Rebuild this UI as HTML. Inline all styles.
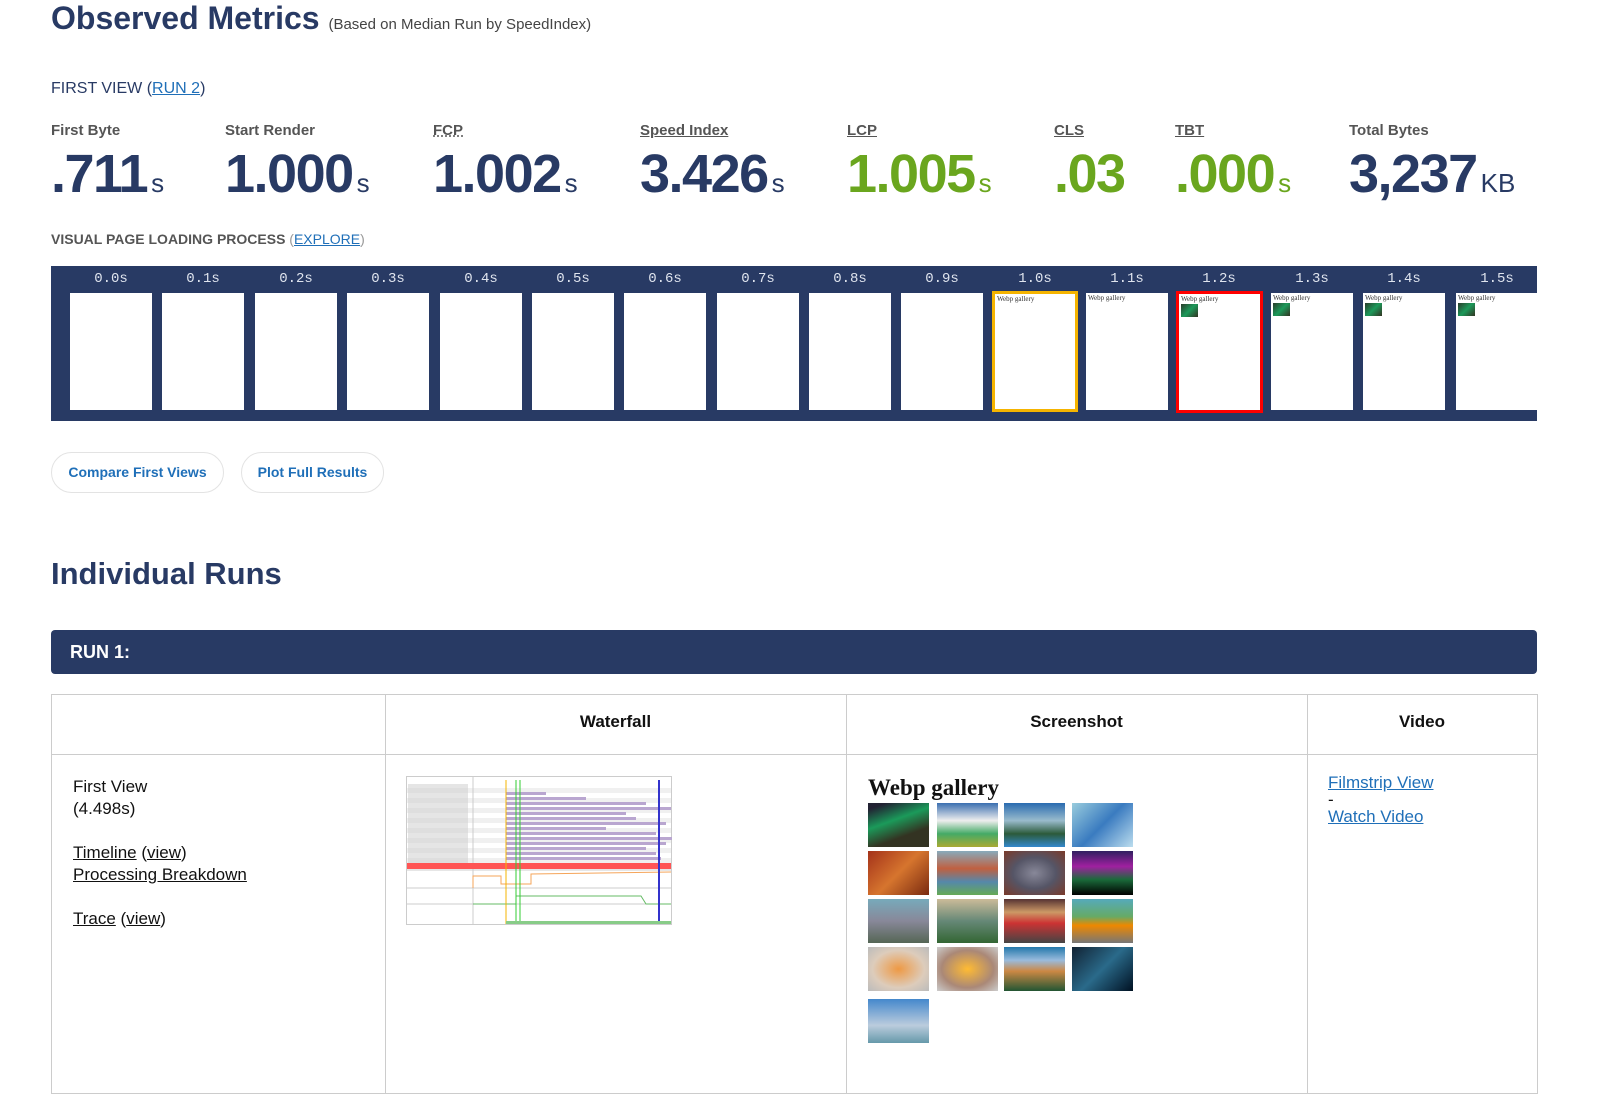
<!DOCTYPE html>
<html><head><meta charset="utf-8"><style>
*{margin:0;padding:0;box-sizing:border-box}
body{width:1600px;height:1053px;overflow:hidden;background:#fff;font-family:"Liberation Sans",sans-serif;color:#283a64;position:relative}
.a{position:absolute}
h1{position:absolute;left:51px;top:0px;font-size:32px;font-weight:bold;letter-spacing:0;white-space:nowrap}
h1 small{font-size:15px;font-weight:normal;color:#444;letter-spacing:0}
.lab{position:absolute;top:122px;font-size:15px;font-weight:bold;color:#555;white-space:nowrap}
.val{position:absolute;top:143px;font-size:54px;font-weight:bold;letter-spacing:-1.5px;white-space:nowrap}
.val span{font-size:26px;font-weight:normal;letter-spacing:0;margin-left:4px}
.g{color:#6aa61e}
a{color:#1f6fb8}
.strip{position:absolute;left:51px;top:266px;width:1486px;height:155px;background:#283a64;overflow:hidden}
.fr{position:absolute;top:27px;width:82px;height:117px;background:#fff}
.tl{position:absolute;top:5px;width:82px;text-align:center;color:#dfe4ee;font-family:"Liberation Mono",monospace;font-size:14px}
.wg{font-family:"Liberation Serif",serif;font-size:7px;color:#333;position:absolute;left:2px;top:1px}
.th{position:absolute;left:2px;top:10px;width:17px;height:13px;background:linear-gradient(135deg,#2a3b2a,#1c9a5a 50%,#332)}
.btn{position:absolute;top:452px;height:41px;border:1px solid #e3e3e3;border-radius:21px;font-size:14px;font-weight:bold;color:#1f6fb8;line-height:39px;text-align:center}
.run{position:absolute;left:51px;top:630px;width:1486px;height:44px;background:#283a64;border-radius:4px;color:#fff;font-weight:bold;font-size:18px;line-height:44px;padding-left:19px}
.tb{position:absolute;border:1px solid #ccc}
.hd{position:absolute;top:712px;font-weight:bold;font-size:17px;color:#111;text-align:center}
.c{position:absolute;font-size:17px;color:#111;line-height:22px}
.c u{text-decoration:underline}
.pic{position:absolute;width:61px;height:44px}
</style></head><body>
<h1>Observed Metrics <small>(Based on Median Run by SpeedIndex)</small></h1>
<div class="a" style="left:51px;top:80px;font-size:16px;color:#283a64">FIRST VIEW (<a href="#">RUN 2</a>)</div>

<div class="lab" style="left:51px">First Byte</div>
<div class="lab" style="left:225px">Start Render</div>
<div class="lab" style="left:433px;text-decoration:underline dotted">FCP</div>
<div class="lab" style="left:640px;text-decoration:underline">Speed Index</div>
<div class="lab" style="left:847px;text-decoration:underline">LCP</div>
<div class="lab" style="left:1054px;text-decoration:underline">CLS</div>
<div class="lab" style="left:1175px;text-decoration:underline">TBT</div>
<div class="lab" style="left:1349px">Total Bytes</div>

<div class="val" style="left:51px">.711<span>s</span></div>
<div class="val" style="left:225px">1.000<span>s</span></div>
<div class="val" style="left:433px">1.002<span>s</span></div>
<div class="val" style="left:640px">3.426<span>s</span></div>
<div class="val g" style="left:847px">1.005<span>s</span></div>
<div class="val g" style="left:1054px">.03</div>
<div class="val g" style="left:1175px">.000<span>s</span></div>
<div class="val" style="left:1349px">3,237<span>KB</span></div>

<div class="a" style="left:51px;top:231px;font-size:14px;font-weight:bold;color:#555">VISUAL PAGE LOADING PROCESS <span style="font-weight:normal;color:#999">(</span><a href="#" style="font-weight:normal">EXPLORE</a><span style="font-weight:normal;color:#999">)</span></div>

<div class="strip">
<div class="tl" style="left:19px">0.0s</div><div class="fr" style="left:19px"></div>
<div class="tl" style="left:111px">0.1s</div><div class="fr" style="left:111px"></div>
<div class="tl" style="left:204px">0.2s</div><div class="fr" style="left:204px"></div>
<div class="tl" style="left:296px">0.3s</div><div class="fr" style="left:296px"></div>
<div class="tl" style="left:389px">0.4s</div><div class="fr" style="left:389px"></div>
<div class="tl" style="left:481px">0.5s</div><div class="fr" style="left:481px"></div>
<div class="tl" style="left:573px">0.6s</div><div class="fr" style="left:573px"></div>
<div class="tl" style="left:666px">0.7s</div><div class="fr" style="left:666px"></div>
<div class="tl" style="left:758px">0.8s</div><div class="fr" style="left:758px"></div>
<div class="tl" style="left:850px">0.9s</div><div class="fr" style="left:850px"></div>
<div class="tl" style="left:943px">1.0s</div><div class="fr" style="left:941px;top:25px;width:86px;height:121px;border:3px solid #f5b400"><div class="wg">Webp gallery</div></div>
<div class="tl" style="left:1035px">1.1s</div><div class="fr" style="left:1035px"><div class="wg">Webp gallery</div></div>
<div class="tl" style="left:1127px">1.2s</div><div class="fr" style="left:1125px;top:25px;width:87px;height:122px;border:3px solid #f00"><div class="wg">Webp gallery</div><div class="th"></div></div>
<div class="tl" style="left:1220px">1.3s</div><div class="fr" style="left:1220px"><div class="wg">Webp gallery</div><div class="th"></div></div>
<div class="tl" style="left:1312px">1.4s</div><div class="fr" style="left:1312px"><div class="wg">Webp gallery</div><div class="th"></div></div>
<div class="tl" style="left:1405px">1.5s</div><div class="fr" style="left:1405px"><div class="wg">Webp gallery</div><div class="th"></div></div>
</div>

<div class="btn" style="left:51px;width:173px">Compare First Views</div>
<div class="btn" style="left:241px;width:143px">Plot Full Results</div>

<div class="a" style="left:51px;top:556px;font-size:31px;font-weight:bold">Individual Runs</div>
<div class="run">RUN 1:</div>

<div class="tb" style="left:51px;top:694px;width:1487px;height:400px"></div>
<div class="a" style="left:51px;top:754px;width:1487px;height:1px;background:#ccc"></div>
<div class="a" style="left:385px;top:694px;width:1px;height:400px;background:#ccc"></div>
<div class="a" style="left:846px;top:694px;width:1px;height:400px;background:#ccc"></div>
<div class="a" style="left:1307px;top:694px;width:1px;height:400px;background:#ccc"></div>
<div class="hd" style="left:385px;width:461px">Waterfall</div>
<div class="hd" style="left:846px;width:461px">Screenshot</div>
<div class="hd" style="left:1307px;width:230px">Video</div>

<div class="c" style="left:73px;top:776px">First View<br>(4.498s)<br><br><u>Timeline</u> (<u>view</u>)<br><u>Processing Breakdown</u><br><br><u>Trace</u> (<u>view</u>)</div>

<svg class="a" style="left:406px;top:776px" width="266" height="150" viewBox="0 0 266 150">
<rect x="0.5" y="0.5" width="265" height="148" fill="#fff" stroke="#ccc"/>
<g fill="#f0f0f0"><rect x="1" y="12" width="264" height="5"/><rect x="1" y="22" width="264" height="5"/><rect x="1" y="32" width="264" height="5"/><rect x="1" y="42" width="264" height="5"/><rect x="1" y="52" width="264" height="5"/><rect x="1" y="62" width="264" height="5"/><rect x="1" y="72" width="264" height="5"/><rect x="1" y="82" width="264" height="5"/></g>
<g fill="#ccc"><rect x="2" y="8" width="60" height="80" opacity=".5"/></g>
<line x1="67" y1="0" x2="67" y2="148" stroke="#ccc"/>
<g fill="#b9a6d0"><rect x="100" y="16" width="40" height="3"/><rect x="100" y="21" width="80" height="3"/><rect x="100" y="26" width="140" height="3"/><rect x="100" y="31" width="165" height="3"/><rect x="100" y="36" width="120" height="3"/><rect x="100" y="41" width="130" height="3"/><rect x="100" y="46" width="160" height="3"/><rect x="100" y="51" width="100" height="3"/><rect x="100" y="56" width="150" height="3"/><rect x="100" y="61" width="180" height="3"/><rect x="100" y="66" width="160" height="3"/><rect x="100" y="71" width="140" height="3"/><rect x="100" y="76" width="150" height="3"/><rect x="100" y="81" width="155" height="3"/></g>
<rect x="1" y="87" width="264" height="6" fill="#f55"/>
<line x1="1" y1="94" x2="265" y2="94" stroke="#ccc"/><line x1="1" y1="112" x2="265" y2="112" stroke="#ccc"/><line x1="1" y1="128" x2="265" y2="128" stroke="#ccc"/>
<polyline points="67,112 67,100 95,100 95,108 125,108 125,98 265,96" fill="none" stroke="#f5a55a"/>
<polyline points="67,128 110,128 110,120 235,120 240,128 265,128" fill="none" stroke="#6b6"/>
<line x1="100" y1="4" x2="100" y2="148" stroke="#f5b400"/><line x1="110" y1="4" x2="110" y2="148" stroke="#3c3"/><line x1="114" y1="4" x2="114" y2="148" stroke="#3c3"/>
<line x1="253" y1="4" x2="253" y2="148" stroke="#33c" stroke-width="2"/>
<rect x="100" y="145" width="165" height="3" fill="#8c8"/>
</svg>

<div class="a" style="left:868px;top:775px;font-family:'Liberation Serif',serif;font-weight:bold;font-size:23px;color:#111">Webp gallery</div>
<div class="pic" style="left:868px;top:803px;background:linear-gradient(160deg,#223 10%,#1b9a5a 40%,#332 70%)"></div>
<div class="pic" style="left:937px;top:803px;background:linear-gradient(180deg,#3b6fb0,#eee 40%,#4a6 70%,#aa3)"></div>
<div class="pic" style="left:1004px;top:803px;background:linear-gradient(180deg,#2a6bb0,#9bc 40%,#2b5a3a 70%,#38c)"></div>
<div class="pic" style="left:1072px;top:803px;background:linear-gradient(135deg,#9cd,#3a7bc0,#bde)"></div>
<div class="pic" style="left:868px;top:851px;background:linear-gradient(135deg,#a4321a,#d6752e,#7a2a10)"></div>
<div class="pic" style="left:937px;top:851px;background:linear-gradient(180deg,#8ab,#c06040 40%,#58a 70%,#6a5)"></div>
<div class="pic" style="left:1004px;top:851px;background:radial-gradient(#889,#556 50%,#7a3a2a)"></div>
<div class="pic" style="left:1072px;top:851px;background:linear-gradient(180deg,#302060,#a020a0 35%,#1a6a3a 65%,#000)"></div>
<div class="pic" style="left:868px;top:899px;background:linear-gradient(180deg,#7ab,#889 50%,#565)"></div>
<div class="pic" style="left:937px;top:899px;background:linear-gradient(180deg,#cb9,#687 50%,#363)"></div>
<div class="pic" style="left:1004px;top:899px;background:linear-gradient(180deg,#533,#c96 30%,#c33 55%,#444)"></div>
<div class="pic" style="left:1072px;top:899px;background:linear-gradient(180deg,#5ab,#6a6 40%,#e80 60%,#777)"></div>
<div class="pic" style="left:868px;top:947px;background:radial-gradient(#e94,#dcb 60%,#bbb)"></div>
<div class="pic" style="left:937px;top:947px;background:radial-gradient(#fb3,#a87 60%,#ccc)"></div>
<div class="pic" style="left:1004px;top:947px;background:linear-gradient(180deg,#27a,#9bd 30%,#c84 55%,#253)"></div>
<div class="pic" style="left:1072px;top:947px;background:linear-gradient(135deg,#123,#2a6a8a 50%,#012)"></div>
<div class="pic" style="left:868px;top:999px;background:linear-gradient(180deg,#48c,#bcd 60%,#69a)"></div>

<div class="c" style="left:1328px;top:774px;line-height:17px"><a href="#">Filmstrip View</a><br>-<br><a href="#">Watch Video</a></div>
</body></html>
